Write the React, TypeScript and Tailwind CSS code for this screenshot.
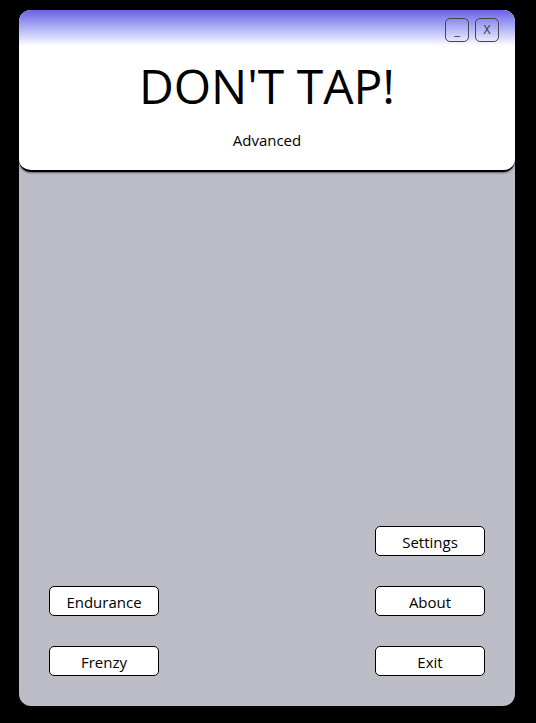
import React from "react";

const font = { fontFamily: '"Open Sans", "Noto Sans", sans-serif' };

const MenuButton = ({ label }: { label: string }) => (
  <button className="w-[110px] h-[30px] bg-white border border-black rounded-[5px] text-[15px] text-black leading-none pt-[2px]">
    {label}
  </button>
);

export default function App() {
  return (
    <div className="w-[536px] h-[723px] bg-black pt-[10px] pl-[19px]" style={font}>
      <div className="w-[496px] h-[696px] rounded-[12px] bg-[#bdbdc8] flex flex-col overflow-hidden">
        <header className="h-[162px] shrink-0 bg-white rounded-b-[12px] border-b-2 border-black shadow-[0_1px_2px_rgba(0,0,0,0.5)] flex flex-col">
          <div className="h-[36px] bg-gradient-to-b from-[#6c60e3] to-white flex justify-end items-start gap-[6px] pt-[8px] pr-[16px]">
            <button className="w-[24px] h-[24px] rounded-[5px] border border-[#444] text-[13px] text-[#333] leading-none flex items-end justify-center pb-[4px]">
              _
            </button>
            <button className="w-[24px] h-[24px] rounded-[5px] border border-[#444] text-[12px] text-[#333] leading-none flex items-center justify-center">
              X
            </button>
          </div>
          <h1 className="text-center text-[48px] leading-none text-black mt-[16px]">DON'T TAP!</h1>
          <p className="text-center text-[15px] text-black mt-[19px]">Advanced</p>
        </header>
        <main className="flex-1 flex flex-col justify-end gap-[30px] px-[30px] pb-[30px]">
          <div className="flex justify-end">
            <MenuButton label="Settings" />
          </div>
          <div className="flex justify-between">
            <MenuButton label="Endurance" />
            <MenuButton label="About" />
          </div>
          <div className="flex justify-between">
            <MenuButton label="Frenzy" />
            <MenuButton label="Exit" />
          </div>
        </main>
      </div>
    </div>
  );
}
